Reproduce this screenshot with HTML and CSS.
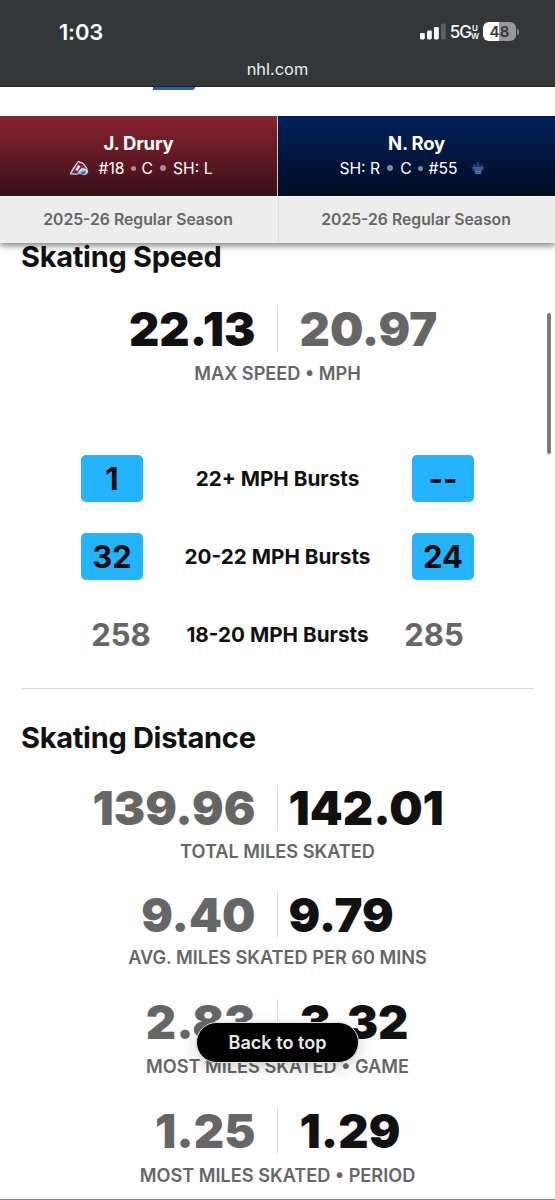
FILE: index.html
```html
<!DOCTYPE html>
<html lang="en">
<head>
<meta charset="utf-8">
<title>Player comparison</title>
<link rel="stylesheet" href="styles.css">
</head>
<body>
<div class="screen">
  <header class="browser">
    <div class="status">
      <span class="time">1:03</span>
      <div class="indicators">
        <svg class="signal" width="26" height="18" viewBox="0 0 26 18">
          <rect x="0" y="10" width="4.8" height="6.4" rx="1.3" fill="#fff"/>
          <rect x="7" y="7.4" width="4.8" height="9" rx="1.3" fill="#fff"/>
          <rect x="14" y="4" width="4.8" height="12.4" rx="1.3" fill="#fff"/>
          <rect x="21" y="0.6" width="4.8" height="15.8" rx="1.3" fill="#5c5f61"/>
        </svg>
        <span class="network">5G</span>
        <span class="band"><span>U</span><span>W</span></span>
        <span class="battery"><span class="charge">48</span></span>
        <span class="battery-tip"></span>
      </div>
    </div>
    <div class="url">nhl.com</div>
  </header>
  <div class="page-top"><span class="tab-edge"></span></div>
  <div class="players">
    <section class="player">
      <div class="card avalanche">
        <h2 class="name">J. Drury</h2>
        <div class="info info-left">
          <svg class="logo logo-col" width="20" height="16" viewBox="0 0 20 16">
            <path d="M.8 14.6 3.6 8 9.3 1 14 2.8 18.2 8 19.4 12.6 16 15.2 11 14 7 15Z" fill="#8fb3d0"/>
            <path d="M3 12.7 9.2 2.2 13.6 4 17.4 9.4 15.8 9 12.6 7.2 9.8 11.8 7.6 13.6Z" fill="#7c2039"/>
            <path d="M1.2 14.1 9.2 1.4 14.4 3.4 18.1 8.4" fill="none" stroke="#d9e1e8" stroke-width="1"/>
            <path d="M6.2 10.6 9 5 11.6 6.2 8.8 10.8Z" fill="#e1e4ea"/>
            <path d="M9.4 12.6Q13.4 7 18 10.4 18.8 14 14.5 13.8" fill="none" stroke="#d7e3ea" stroke-width="1.3"/>
            <path d="M11.5 13.1 15.3 11.2 17.1 12.5 14.8 14.2Z" fill="#28679a"/>
          </svg>
          <span>#18</span><i class="dot dot-small"></i><span>C</span><i class="dot"></i><span>SH: L</span>
        </div>
      </div>
      <div class="season">2025-26 Regular Season</div>
    </section>
    <section class="player">
      <div class="card leafs">
        <h2 class="name">N. Roy</h2>
        <div class="info info-right">
          <span>SH: R</span><i class="dot"></i><span>C</span><i class="dot dot-small"></i><span>#55</span>
          <svg class="logo logo-tor" width="16" height="16" viewBox="0 0 16 16">
            <path d="M8 0.7 9 4.1 10.5 3.2 10.3 5.5 13 3.4 12.5 6.2 15.4 6.1 13.4 9.1 14.2 10.1 12.1 11.4 12.2 14 8.7 13.5 8 15.3 7.3 13.5 3.8 14 3.9 11.4 1.8 10.1 2.6 9.1.6 6.1 3.5 6.2 3 3.4 5.7 5.5 5.5 3.2 7 4.1Z" fill="#0d2960"/>
            <path d="M8 1.5V7M5.3 7.3 3.7 4.9M10.7 7.3 12.3 4.9" stroke="#4367a0" stroke-width=".8"/>
            <path d="M2.6 8H13.4M4.2 10H11.8M4.8 11.8H11.2M5.3 13.2H10.7" stroke="#7690bd" stroke-width="1.1"/>
          </svg>
        </div>
      </div>
      <div class="season">2025-26 Regular Season</div>
    </section>
  </div>
  <main class="stats">
    <h1 class="heading">Skating Speed</h1>
    <div class="metric metric-speed">
      <div class="pair"><span class="value lead">22.13</span><span class="value">20.97</span></div>
      <div class="caption">MAX SPEED • MPH</div>
    </div>
    <div class="bursts">
      <div class="burst"><span class="count best">1</span><span class="label">22+ MPH Bursts</span><span class="count best">--</span></div>
      <div class="burst"><span class="count best">32</span><span class="label">20-22 MPH Bursts</span><span class="count best">24</span></div>
      <div class="burst plain"><span class="count">258</span><span class="label">18-20 MPH Bursts</span><span class="count">285</span></div>
    </div>
    <h1 class="heading heading-distance">Skating Distance</h1>
    <div class="metric metric-total">
      <div class="pair close"><span class="value">139.96</span><span class="value lead">142.01</span></div>
      <div class="caption">TOTAL MILES SKATED</div>
    </div>
    <div class="metric metric-average">
      <div class="pair close"><span class="value">9.40</span><span class="value lead">9.79</span></div>
      <div class="caption">AVG. MILES SKATED PER 60 MINS</div>
    </div>
    <div class="metric metric-game">
      <div class="pair"><span class="value">2.83</span><span class="value lead">3.32</span></div>
      <div class="caption">MOST MILES SKATED • GAME</div>
    </div>
    <div class="metric">
      <div class="pair"><span class="value">1.25</span><span class="value lead">1.29</span></div>
      <div class="caption">MOST MILES SKATED • PERIOD</div>
    </div>
  </main>
  <button class="back-top">Back to top</button>
  <div class="scrollbar"></div>
</div>
</body>
</html>
```
FILE: styles.css
```css
* { box-sizing: border-box; }
body { margin: 0; background: #fff; font-family: Inter, "Liberation Sans", sans-serif; color: #111; }
.screen { position: relative; width: 555px; height: 1200px; overflow: hidden; border-bottom: 1px solid #858585; white-space: nowrap; }
.browser { height: 87px; background: #333739; border-bottom: 1px solid #202325; color: #fff; }
.status { display: flex; justify-content: space-between; height: 56px; padding: 19px 36px 0 59px; }
.time { font-size: 22px; font-weight: 600; line-height: 26px; letter-spacing: -.2px; }
.indicators { display: flex; align-items: center; height: 25px; }
.signal { margin-right: 4px; }
.network { font-size: 17px; font-weight: 500; letter-spacing: -1px; }
.band { display: flex; flex-direction: column; width: 8px; font-size: 8px; font-weight: 600; line-height: 8px; align-items: center; }
.battery { width: 33px; height: 19px; margin-left: 4px; border-radius: 6px; background: linear-gradient(90deg, #fff 0 49%, #97999a 49%); }
.charge { display: block; color: #333739; text-align: center; font-size: 15px; font-weight: 600; line-height: 19px; letter-spacing: .3px; }
.battery-tip { width: 2px; height: 6px; margin-left: 1px; border-radius: 0 3px 3px 0; background: #85888a; }
.url { text-align: center; font-size: 16.4px; line-height: 26px; color: #f0f0f0; }
.page-top { height: 29px; padding-left: 153px; }
.tab-edge { display: block; width: 42px; height: 3px; background: #2961af; border-radius: 0 0 3px 0; }
.players { position: relative; z-index: 1; display: grid; grid-template-columns: 278px 277px; height: 127px; background: #ededed; box-shadow: 0 3px 6px #0007; clip-path: inset(0 0 -16px 0); }
.player + .player .season { border-left: 1px solid #ddd; }
.player:first-child .card { border-right: 1px solid #d6c7cc; }
.card { height: 81px; padding-top: 15px; border-bottom: 1px solid #fff; color: #fff; text-align: center; }
.avalanche { background: linear-gradient(#8a2432, #390f16); }
.leafs { background: linear-gradient(#00205b, #000d25); }
.name { margin: 0; font-size: 18.5px; line-height: 24px; font-weight: 700; letter-spacing: -.2px; }
.info { display: flex; justify-content: center; align-items: center; height: 26px; font-size: 15.7px; }
.info-left { padding-left: 5px; }
.info-right { padding-right: 8px; }
.dot { width: 6px; height: 6px; margin: 0 7px; border-radius: 50%; background: #ffffff80; }
.dot-small { width: 5px; height: 5px; margin: 0 6px; }
.logo-col { margin-right: 9px; }
.logo-tor { margin-left: 12px; }
.season { height: 46px; padding-right: 2px; color: #666; text-align: center; font-size: 15.75px; font-weight: 600; line-height: 46px; }
.stats { padding: 0 21px; }
.heading { height: 36px; margin: -4px 0 0; font-size: 29px; line-height: 36px; font-weight: 700; letter-spacing: -.3px; }
.metric { text-align: center; }
.metric-speed { margin-top: 31px; height: 149px; }
.pair { display: grid; grid-template-columns: 1fr 1fr; height: 46px; background: linear-gradient(#ddd, #ddd) center / 1px 100% no-repeat; }
.value { color: #666; font-size: 47px; line-height: 46px; font-weight: 900; }
.value:first-child { padding-right: 22px; text-align: right; }
.value:last-child { padding-left: 22px; text-align: left; }
.close .value:last-child { padding-left: 11px; }
.lead.value { color: #111; }
.caption { height: 20px; margin-top: 11px; color: #666; font-size: 18.15px; line-height: 20px; font-weight: 600; }
.metric-total .caption { margin-top: 10px; }
.metric-average .caption { margin-top: 9px; }
.bursts { display: grid; row-gap: 31px; padding: 0 60px 30px; border-bottom: 1px solid #d9d9d9; }
.burst { display: grid; grid-template-columns: 62px 1fr 62px; height: 47px; align-items: center; text-align: center; }
.plain { padding: 0 9px; }
.count { height: 47px; border-radius: 5px; color: #666; font-size: 31px; line-height: 47px; font-weight: 650; }
.best { background: #24b3ff; color: #0c0c0c; }
.label { margin: 0 -10px; font-size: 20.7px; line-height: 46px; font-weight: 650; }
.heading-distance { margin-top: 31px; }
.metric-total { margin-top: 29px; height: 107px; }
.metric-average { height: 107px; }
.metric-game { height: 109px; }
.back-top { position: absolute; z-index: 2; left: 196px; top: 1022px; width: 163px; height: 41px; padding: 0 0 1px; border: 1px solid #e0e0e0; border-radius: 21px; background: #000; color: #e8e8e8; font: 600 18.1px/38px Inter, sans-serif; box-shadow: 0 4px 14px #0003; }
.scrollbar { position: absolute; z-index: 3; right: 4px; top: 313px; width: 4px; height: 141px; border-radius: 2px; background: #7b7b7b; }
```
